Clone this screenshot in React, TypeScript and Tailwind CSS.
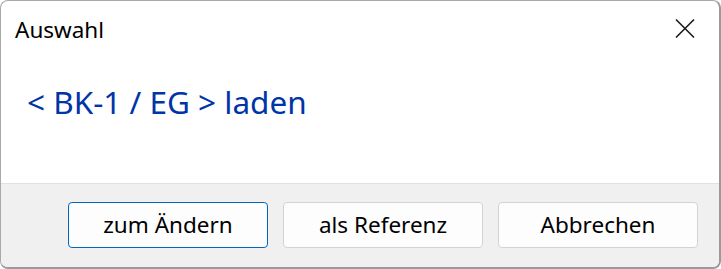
const buttons = [
  { label: "zum Ändern", primary: true },
  { label: "als Referenz", primary: false },
  { label: "Abbrechen", primary: false },
];

export default function App() {
  return (
    <div className="w-[721px] h-[269px] bg-white">
      <div
        className="w-full h-full flex flex-col overflow-hidden rounded-[8px] border border-[#a9a9a9] border-r-2 border-b-2 border-r-[#9a9a9a] border-b-[#9a9a9a] bg-white"
        style={{ fontFamily: '"Noto Sans", sans-serif' }}
      >
        <div className="h-[182px] flex flex-col">
          <div className="flex items-start justify-between pl-[14px] pr-[24px] pt-[14px]">
            <span className="text-[22.5px] leading-[30px] text-black">Auswahl</span>
            <svg className="mt-[3px]" width="20" height="21" viewBox="0 0 20 21" fill="none">
              <path d="M1 1.5L19 19.5M19 1.5L1 19.5" stroke="#1a1a1a" strokeWidth="1.6" />
            </svg>
          </div>
          <div className="pl-[26px] pt-[38px] text-[31.5px] leading-[38px] text-[#0035a8]">
            &lt; BK-1 / EG &gt; laden
          </div>
        </div>
        <div className="flex-1 bg-[#f0f0f0] border-t border-[#e1e1e1] flex justify-end gap-[15px] pr-[21px] pt-[18px]">
          {buttons.map((b) => (
            <button
              key={b.label}
              className={`w-[200px] h-[46px] rounded-[4px] bg-[#fdfdfd] text-[22.5px] text-black border ${
                b.primary ? "border-[#0067c0]" : "border-[#d3d3d3]"
              }`}
            >
              {b.label}
            </button>
          ))}
        </div>
      </div>
    </div>
  );
}
